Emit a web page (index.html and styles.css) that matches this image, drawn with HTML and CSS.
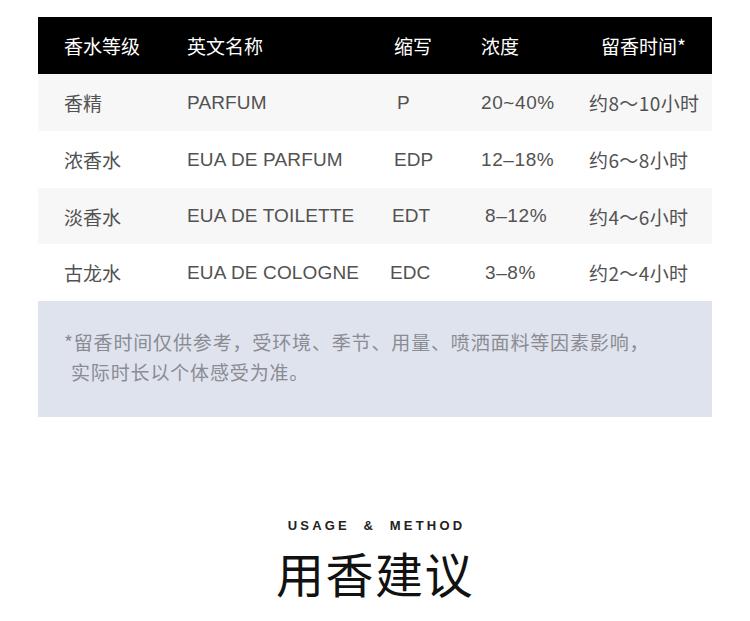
FILE: index.html
```html
<!DOCTYPE html>
<html lang="zh">
<head>
<meta charset="utf-8">
<link rel="stylesheet" href="styles.css">
</head>
<body>
<div class="page">
  <div class="table">
    <div class="row head">
      <div class="c1">香水等级</div>
      <div class="c2">英文名称</div>
      <div class="c3">缩写</div>
      <div class="c4">浓度</div>
      <div class="c5 hc5">留香时间*</div>
    </div>
    <div class="row gray">
      <div class="c1">香精</div>
      <div class="c2">PARFUM</div>
      <div class="c3 p">P</div>
      <div class="c4">20~40%</div>
      <div class="c5">约8～10小时</div>
    </div>
    <div class="row">
      <div class="c1">浓香水</div>
      <div class="c2">EUA DE PARFUM</div>
      <div class="c3">EDP</div>
      <div class="c4">12–18%</div>
      <div class="c5">约6～8小时</div>
    </div>
    <div class="row gray short">
      <div class="c1">淡香水</div>
      <div class="c2">EUA DE TOILETTE</div>
      <div class="c3 edt">EDT</div>
      <div class="c4 narrow">8–12%</div>
      <div class="c5">约4～6小时</div>
    </div>
    <div class="row">
      <div class="c1">古龙水</div>
      <div class="c2">EUA DE COLOGNE</div>
      <div class="c3 edc">EDC</div>
      <div class="c4 narrow">3–8%</div>
      <div class="c5">约2～4小时</div>
    </div>
    <div class="note">
      <p class="line">*留香时间仅供参考，受环境、季节、用量、喷洒面料等因素影响，</p>
      <p class="line indent">实际时长以个体感受为准。</p>
    </div>
  </div>
  <div class="usage">
    <div class="en">USAGE&nbsp;&nbsp;&amp;&nbsp;&nbsp;METHOD</div>
    <h2 class="title">用香建议</h2>
  </div>
</div>
</body>
</html>
```
FILE: styles.css
```css
html, body {
  margin: 0;
  padding: 0;
  background: #ffffff;
}
body {
  font-family: "Liberation Sans", "Noto Sans CJK SC", sans-serif;
}
.page {
  width: 750px;
  padding-top: 17px;
}
.table {
  margin-left: 38px;
  width: 674px;
}
.row {
  display: grid;
  grid-template-columns: 123px 207px 87px 108px 1fr;
  align-items: center;
  height: 57px;
  padding-left: 26px;
  box-sizing: border-box;
  font-size: 19px;
  color: #525252;
  white-space: nowrap;
}
.row.short {
  height: 56px;
}
.row.gray {
  background: #f7f7f7;
}
.row.head {
  background: #000000;
  color: #ffffff;
  font-size: 19px;
}
.c1, .c5 {
  font-family: "Noto Sans CJK SC", sans-serif;
}
.c5 {
  letter-spacing: 0.4px;
}
.c2 {
  letter-spacing: 0.15px;
}
.head .c1, .head .c2, .head .c3, .head .c4, .head .c5 {
  font-family: "Noto Sans CJK SC", sans-serif;
  letter-spacing: 0;
}
.hc5 {
  padding-left: 12px;
}
.p {
  padding-left: 3px;
}
.edt {
  margin-left: -2px;
}
.edc {
  margin-left: -4px;
}
.narrow {
  padding-left: 4px;
}
.c4 {
  letter-spacing: 0.6px;
}
.note {
  background: #dfe3ee;
  height: 116px;
  box-sizing: border-box;
  padding: 26px 0 0 26px;
  color: #8a8c92;
  font-family: "Noto Sans CJK SC", sans-serif;
  font-size: 19px;
  letter-spacing: 0.85px;
}
.line {
  margin: 0;
  line-height: 30px;
  white-space: nowrap;
}
.indent {
  padding-left: 7px;
}
.usage {
  display: flex;
  flex-direction: column;
  align-items: center;
  padding-top: 101px;
}
.en {
  font-family: "Liberation Sans", sans-serif;
  font-weight: bold;
  font-size: 13px;
  letter-spacing: 3.2px;
  color: #222222;
  line-height: 16px;
  padding-left: 3px;
}
.title {
  margin: 8px 0 0 0;
  font-family: "Noto Sans CJK SC", sans-serif;
  font-weight: 400;
  font-size: 48px;
  line-height: 60px;
  letter-spacing: 1.5px;
  color: #111111;
}
```
